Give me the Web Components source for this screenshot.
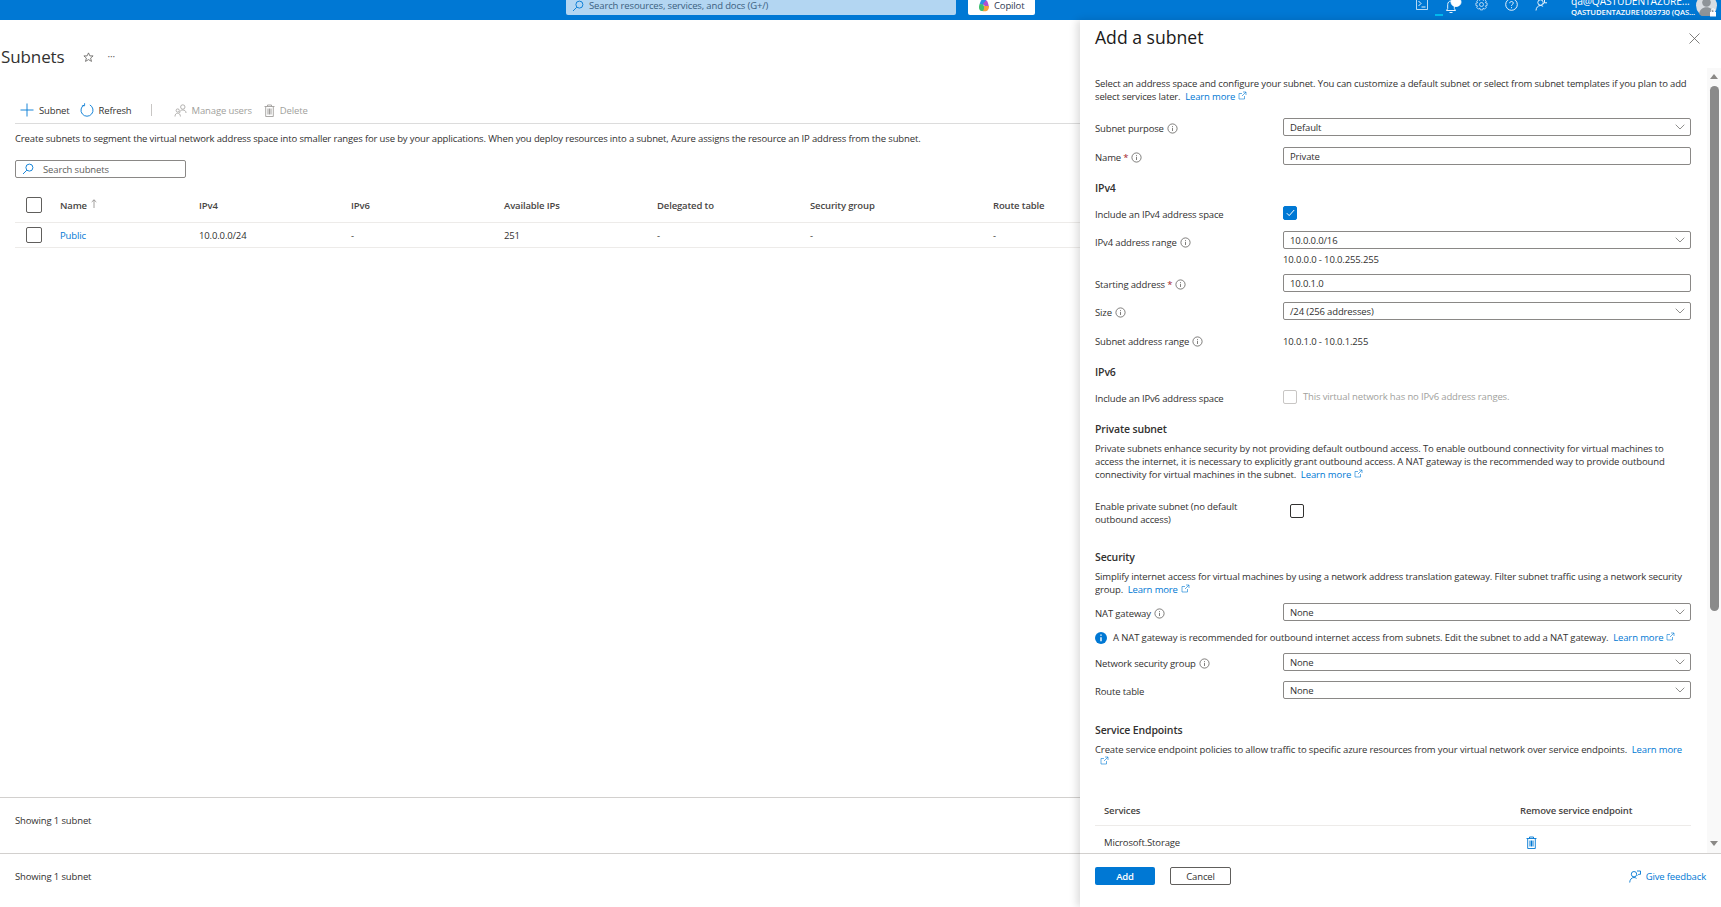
<!DOCTYPE html>
<html lang="en">
<head>
<meta charset="utf-8">
<title>Add a subnet</title>
<style>
  html, body { margin: 0; height: 100%; overflow: hidden; background: #fff; }
  body { font: 9.5px/13px "Open Sans", sans-serif; letter-spacing: -.14px; color: #323130; }
</style>
</head>
<body>
<az-shell>
  <az-topbar slot="top"></az-topbar>
  <az-blade slot="left"></az-blade>
  <az-panel slot="right">
    <p style="margin:9px 0 0">Select an address space and configure your subnet. You can customize a default subnet or select from subnet templates if you plan to add<br>select services later. &nbsp;<az-learn>Learn more</az-learn></p>
    <az-field style="margin-top:15px" label="Subnet purpose" info><az-select>Default</az-select></az-field>
    <az-field style="margin-top:11px" label="Name" required info><az-input>Private</az-input></az-field>
    <az-heading style="margin-top:16px">IPv4</az-heading>
    <az-field style="margin-top:11px" label="Include an IPv4 address space" pad="2"><az-check state="on"></az-check></az-field>
    <az-field style="margin-top:10px" label="IPv4 address range" info pad="5"><az-select>10.0.0.0/16</az-select></az-field>
    <az-field style="margin-top:4px" pad="0">10.0.0.0 - 10.0.255.255</az-field>
    <az-field style="margin-top:8px" label="Starting address" required info><az-input>10.0.1.0</az-input></az-field>
    <az-field style="margin-top:10px" label="Size" info><az-select>/24 (256 addresses)</az-select></az-field>
    <az-field style="margin-top:15px" label="Subnet address range" info pad="0">10.0.1.0 - 10.0.1.255</az-field>
    <az-heading style="margin-top:17px">IPv6</az-heading>
    <az-field style="margin-top:11px" label="Include an IPv6 address space" pad="2"><az-check state="off">This virtual network has no IPv6 address ranges.</az-check></az-field>
    <az-heading style="margin-top:17px">Private subnet</az-heading>
    <p style="margin:6px 0 0;letter-spacing:-.12px">Private subnets enhance security by not providing default outbound access. To enable outbound connectivity for virtual machines to<br>access the internet, it is necessary to explicitly grant outbound access. A NAT gateway is the recommended way to provide outbound<br>connectivity for virtual machines in the subnet. &nbsp;<az-learn>Learn more</az-learn></p>
    <az-field style="margin-top:19px" label="Enable private subnet (no default outbound access)" pad="0"><az-check state="empty" style="margin:4px 0 0 7px"></az-check></az-field>
    <az-heading style="margin-top:24px">Security</az-heading>
    <p style="margin:6px 0 0">Simplify internet access for virtual machines by using a network address translation gateway. Filter subnet traffic using a network security<br>group. &nbsp;<az-learn>Learn more</az-learn></p>
    <az-field style="margin-top:7px" label="NAT gateway" info><az-select>None</az-select></az-field>
    <az-note style="margin-top:10px;letter-spacing:-.12px">A NAT gateway is recommended for outbound internet access from subnets. Edit the subnet to add a NAT gateway. &nbsp;<az-learn>Learn more</az-learn></az-note>
    <az-field style="margin-top:9px" label="Network security group" info><az-select>None</az-select></az-field>
    <az-field style="margin-top:10px" label="Route table"><az-select>None</az-select></az-field>
    <az-heading style="margin-top:24px">Service Endpoints</az-heading>
    <p style="margin:6px 0 0;letter-spacing:-.12px">Create service endpoint policies to allow traffic to specific azure resources from your virtual network over service endpoints. &nbsp;<az-learn wrap>Learn more</az-learn></p>
    <az-endpoints style="margin-top:27px"></az-endpoints>
  </az-panel>
</az-shell>

<script>
const ICONS = {
  info: '<svg width="11" height="11" viewBox="0 0 11 11" fill="none" stroke="#605e5c" stroke-width=".8"><circle cx="5.5" cy="5.5" r="4.6"/><path d="M5.5 4.8v3.2M5.5 3v.9"/></svg>',
  ext: '<svg width="9" height="9" viewBox="0 0 9 9" fill="none" stroke="#0078d4" stroke-width=".6"><path d="M6.5 5v3H1V2.5h3M5 1h3v3M8 1 4 5"/></svg>',
  chev: '<svg width="10" height="6" viewBox="0 0 10 6" fill="none" stroke="#605e5c" stroke-width=".7"><path d="m.7.7 4.3 4.3L9.3.7"/></svg>',
  search: '<svg width="12" height="12" viewBox="0 0 12 12" fill="none" stroke="#0078d4" stroke-width=".9"><circle cx="7.4" cy="4.6" r="3.5"/><path d="M4.8 7.2 1 11"/></svg>',
  plus: '<svg width="14" height="14" viewBox="0 0 14 14" stroke="#0078d4" stroke-width=".9"><path d="M7 .5v13M.5 7h13"/></svg>',
  refresh: '<svg width="14" height="14" viewBox="0 0 14 14" fill="none" stroke="#0078d4" stroke-width=".9"><path d="M4.2 1.9a6 6 0 1 0 5.6 0"/><path d="M4.6.2v2.6H1.9" stroke-width=".8"/></svg>',
  users: '<svg width="13" height="13" viewBox="0 0 13 13" fill="none" stroke="#a19f9d" stroke-width=".8"><circle cx="8.8" cy="3" r="2.2"/><path d="M5.6 9c0-2 1.300-3 3.200-3s3.200 1 3.200 3"/><circle cx="3.700" cy="6.500" r="1.600"/><path d="M1 12.500c0-2 1-3.300 2.700-3.300s2.700 1.300 2.700 3.300"/></svg>',
  trash: c => `<svg width="11" height="13" viewBox="0 0 11 13" fill="none" stroke="${c}" stroke-width=".9"><path d="M.5 2.500h10M3.500 2.500V1h4v1.500M1.700 2.500V12.500h7.600V2.500"/><path d="M4 4.500v6M5.500 4.500v6M7 4.500v6" stroke-width="1"/></svg>`,
  star: '<svg width="11" height="11" viewBox="0 0 11 11" fill="none" stroke="#605e5c" stroke-width=".8"><path d="m5.500.9 1.400 3h3.200L7.600 6.100l.9 3.300-3-1.800-3 1.800.9-3.300L.9 3.900h3.200z"/></svg>',
  close: '<svg width="11" height="11" viewBox="0 0 11 11" stroke="#605e5c" stroke-width=".8"><path d="m.5.500 10 10M10.500.500l-10 10"/></svg>',
  feedback: '<svg width="12" height="13" viewBox="0 0 12 13" fill="none" stroke="#0078d4" stroke-width=".9"><circle cx="5" cy="4.200" r="2.700"/><path d="M.7 12.500c.2-3 1.900-5 4.300-5 1 0 1.800.3 2.500.9M8 1h3.500v3.300H9.700L8.600 5.500"/></svg>',
  copilot: '<svg width="12" height="13" viewBox="0 0 12 13"><path d="M3 1.500C4 .3 7 .2 8 1.200L9 5 4 6 1.600 5z" fill="#2a8fe8"/><path d="M8 1.200c1.200.4 1.800 2 2.200 3.500L11 8 7.500 8 5 5z" fill="#b04fd0"/><path d="M1.600 5 5 5.400 7 8.500 6 12H3.500C1 12 .4 8 1.600 5z" fill="#3fc06e"/><path d="M5.800 7h5c.6 2-.8 5-3 5.300H4.500C6 11 6.300 9 5.800 7z" fill="#f7a13b"/></svg>',
  terminal: '<svg width="12" height="12" viewBox="0 0 12 12" fill="none" stroke="#fff" stroke-width=".9"><path d="M.5.500h11v11H.500z" stroke-opacity=".8"/><path d="m2.500 3 2.500 2.500L2.500 8M5.500 9h4"/></svg>',
  bell: '<svg width="17" height="18" viewBox="0 0 17 18" fill="none" stroke="#fff" stroke-width=".9"><path d="M1.500 14.500h9l-1.200-2V8.500c0-2-1.400-3.500-3.300-3.500S2.700 6.500 2.700 8.500v4zM4.500 16.500h3"/><ellipse cx="11" cy="6" rx="5" ry="4.500" fill="#fff"/></svg>',
  gear: '<svg width="13" height="13" viewBox="0 0 13 13" fill="none" stroke="#fff" stroke-width=".8" stroke-opacity=".85"><circle cx="6.500" cy="6.500" r="2"/><path d="M5.300.7h2.400l.4 1.700 1.500-.9 1.700 1.700-.9 1.500 1.700.4v2.400l-1.700.4.9 1.500-1.700 1.700-1.500-.9-.4 1.700H5.300l-.4-1.700-1.500.9-1.700-1.700.9-1.500-1.700-.4V5.100l1.700-.4-.9-1.500 1.700-1.700 1.500.9z"/></svg>',
  help: '<svg width="13" height="13" viewBox="0 0 13 13" fill="none" stroke="#fff" stroke-width=".9"><circle cx="6.500" cy="6.500" r="5.800"/><path d="M4.700 5.200c0-1 .8-1.700 1.800-1.700s1.800.7 1.800 1.600c0 1.300-1.800 1.300-1.800 2.700M6.500 9.200v1"/></svg>',
  person: '<svg width="13" height="13" viewBox="0 0 13 13" fill="none" stroke="#fff" stroke-width=".9"><circle cx="5.500" cy="4.500" r="2.700"/><path d="M1 12.500c.2-3 2-5 4.500-5 1 0 1.900.3 2.600.9M9.500 1.500v3.300H12M9.500 4.800 8 6.200"/></svg>',
  avatar: '<svg width="21" height="21" viewBox="0 0 21 21"><circle cx="10.500" cy="10.500" r="10.500" fill="#d8dde2"/><circle cx="10.500" cy="7.500" r="4.300" fill="#8e9499"/><path d="M3 19c.7-4.500 3.600-6.800 7.500-6.800S17.300 14.500 18 19a10.500 10.500 0 0 1-15 0z" fill="#8e9499"/></svg>',
  lock: '<svg width="8" height="9" viewBox="0 0 8 9"><path d="M2.300 4V2.500a1.700 1.700 0 0 1 3.400 0V4" fill="none" stroke="#fff"/><path d="M1 4h6v4.500H1z" fill="#fff"/></svg>',
  infoFill: '<svg width="12" height="12" viewBox="0 0 12 12"><circle cx="6" cy="6" r="6" fill="#0078d4"/><path d="M6 5.200v4M6 2.500v1.300" stroke="#fff" stroke-width="1.400"/></svg>',
  check: '<svg width="9" height="8" viewBox="0 0 9 8" fill="none" stroke="#fff" stroke-width="1"><path d="m.8 4.200 2.400 2.400L8.200 1"/></svg>'
};

class AzElement extends HTMLElement {
  connectedCallback() {
    if (this.shadowRoot) return;
    this.attachShadow({ mode: 'open' });
    this.shadowRoot.innerHTML = `<style>${this.css()}</style>${this.html()}`;
  }
}

class AzShell extends AzElement {
  css() {
    return `
      :host { display: grid; grid-template: 20px 1fr / 1080px 1fr; height: 907px; overflow: hidden; }
      ::slotted([slot=top]) { grid-column: 1 / 3; }
    `;
  }
  html() {
    return `<slot name="top"></slot><slot name="left"></slot><slot name="right"></slot>`;
  }
}

class AzTopbar extends AzElement {
  css() {
    return `
      :host { display: block; height: 20px; overflow: hidden; background: #0078d4; color: #fff; }
      .row { display: flex; align-items: flex-start; margin-top: -4px; height: 24px; }
      .search { display: flex; align-items: center; gap: 5px; margin-left: 566px; width: 384px; height: 19px; padding: 0 0 0 6px;
        background: #b3d6f2; border-radius: 0 0 2px 2px; color: #3b5f80; }
      .copilot { display: flex; align-items: center; gap: 4px; margin-left: 12px; width: 57px; height: 19px; padding: 0 0 0 10px;
        background: #fff; border-radius: 0 0 2px 2px; color: #2f3a52; }
      .icons { display: flex; margin-left: auto; align-items: flex-start; }
      .ic { display: block; margin-top: 2px; }
      .ic svg { display: block; }
      .bell { margin: 0 0 0 17px; position: relative; }
      .bar { position: absolute; left: -10px; top: 18px; width: 8px; height: 2px; background: #00bcf2; }
      .gear { margin-left: 13px; }
      .help { margin-left: 17px; }
      .person { margin-left: 17px; }
      .who { margin: 0 0 0 23px; width: 122px; font-size: 10.3px; line-height: 11px; white-space: nowrap; }
      .who b { display: block; font-size: 7.7px; font-weight: 600; letter-spacing: -.1px; }
      .avatar { position: relative; margin: -1px 4px 0 3px; height: 21px; }
      .lock { position: absolute; left: 13px; top: 12px; width: 8px; height: 9px; }
    `;
  }
  html() {
    return `<div class="row">
      <div class="search">${ICONS.search}<span>Search resources, services, and docs (G+/)</span></div>
      <div class="copilot">${ICONS.copilot}<span>Copilot</span></div>
      <div class="icons">
        <span class="ic">${ICONS.terminal}</span>
        <span class="ic bell">${ICONS.bell}<i class="bar"></i></span>
        <span class="ic gear">${ICONS.gear}</span>
        <span class="ic help">${ICONS.help}</span>
        <span class="ic person">${ICONS.person}</span>
        <div class="who">qa@QASTUDENTAZURE...<b>QASTUDENTAZURE1003730 (QAS...</b></div>
        <div class="avatar">${ICONS.avatar}<span class="lock">${ICONS.lock}</span></div>
      </div>
    </div>`;
  }
}

class AzBlade extends AzElement {
  css() {
    return `
      :host { display: flex; flex-direction: column; height: 887px; min-width: 0; overflow: hidden; }
      .title { display: flex; align-items: center; height: 26px; margin-top: 24px; padding-left: 1px; }
      h1 { margin: 0; font-size: 17px; font-weight: 400; line-height: 26px; letter-spacing: -.1px; }
      .star { margin-left: 18px; display: flex; }
      .dots { margin-left: 14px; color: #605e5c; font-size: 10px; position: relative; top: -1px; }
      .tools { display: flex; align-items: center; height: 26px; margin: 27px 0 0 15px; border-bottom: 1px solid #dcdcdc; }
      .tool { display: flex; align-items: center; gap: 5px; white-space: nowrap; }
      .tool.off { color: #a19f9d; }
      .tool svg { display: block; }
      .sep { width: 1px; height: 12px; background: #c8c6c4; margin: 0 22px 0 19px; }
      .desc { margin: 8px 0 0 15px; white-space: nowrap; }
      .search { display: flex; align-items: center; gap: 9px; box-sizing: border-box; width: 171px; height: 18px; margin: 15px 0 0 15px; padding-left: 6px;
        border: 1px solid #8a8886; border-radius: 2px; color: #605e5c; }
      .table { margin: 10px 0 0 15px; }
      .tr { display: grid; grid-template-columns: 45px 139px 152px 153px 153px 153px 183px 87px; align-items: center; border-bottom: 1px solid #edebe9; }
      .tr.head { height: 34px; font-weight: 600; color: #484644; }
      .tr.row { height: 24px; }
      .box { display: block; box-sizing: border-box; width: 16px; height: 16px; margin-left: 11px; border: 1px solid #605e5c; border-radius: 2px; }
      .sort { display: inline-block; margin-left: 4px; vertical-align: 1px; }
      a { color: #0078d4; text-decoration: none; }
      .grow { flex: 1; }
      .foot { box-sizing: border-box; padding: 16px 0 0 15px; border-top: 1px solid #d2d0ce; }
    `;
  }
  html() {
    const head = ['IPv4', 'IPv6', 'Available IPs', 'Delegated to', 'Security group', 'Route table'];
    return `
      <div class="title"><h1>Subnets</h1><span class="star">${ICONS.star}</span><span class="dots">···</span></div>
      <div class="tools">
        <span class="tool" style="margin-left:5px">${ICONS.plus}Subnet</span>
        <span class="tool" style="margin-left:10px">${ICONS.refresh}Refresh</span>
        <i class="sep"></i>
        <span class="tool off">${ICONS.users}Manage users</span>
        <span class="tool off" style="margin-left:12px">${ICONS.trash('#a19f9d')}Delete</span>
      </div>
      <div class="desc">Create subnets to segment the virtual network address space into smaller ranges for use by your applications. When you deploy resources into a subnet, Azure assigns the resource an IP address from the subnet.</div>
      <div class="search">${ICONS.search}<span>Search subnets</span></div>
      <div class="table">
        <div class="tr head"><span><i class="box"></i></span><span>Name<svg class="sort" width="6" height="9" viewBox="0 0 6 9" fill="none" stroke="#8a8886" stroke-width=".8"><path d="M3 9V.8M.7 3 3 .8 5.300 3"/></svg></span>${head.map(h => `<span>${h}</span>`).join('')}</div>
        <div class="tr row"><span><i class="box"></i></span><a>Public</a><span>10.0.0.0/24</span><span>-</span><span>251</span><span>-</span><span>-</span><span>-</span></div>
      </div>
      <div class="grow"></div>
      <div class="foot" style="height:56px">Showing 1 subnet</div>
      <div class="foot" style="height:54px">Showing 1 subnet</div>
    `;
  }
}

class AzPanel extends AzElement {
  css() {
    return `
      :host { display: flex; flex-direction: column; height: 887px; background: #fff; position: relative; z-index: 1; box-shadow: -3px 0 8px rgba(0,0,0,.14); }
      header { display: flex; justify-content: space-between; align-items: center; height: 34px; padding: 0 21px 0 15px; margin-bottom: 14px; flex: none; }
      h2 { margin: 0; font-size: 17.6px; font-weight: 500; line-height: 34px; color: #1b1a19; letter-spacing: 0; }
      header svg { display: block; margin-top: 3px; }
      .body { display: flex; flex: 1; min-height: 0; }
      .content { width: 596px; margin-left: 15px; overflow: hidden; white-space: nowrap; }
      .bar { display: flex; flex-direction: column; align-items: center; width: 14px; margin-left: 16px; background: #f9f9f9; }
      .up, .down { width: 0; height: 0; border: 4.5px solid transparent; flex: none; }
      .up { border-bottom: 5px solid #8a8886; border-top: 0; margin-top: 6px; }
      .thumb { width: 9px; height: 525px; margin-top: 7px; background: #8a8a8a; border-radius: 5px; flex: none; }
      .down { border-top: 5px solid #8a8886; border-bottom: 0; margin-top: auto; margin-bottom: 7px; }
      footer { display: flex; align-items: flex-start; box-sizing: border-box; height: 54px; border-top: 1px solid #d2d0ce; padding: 13px 15px 0; flex: none; }
      button { box-sizing: border-box; height: 18px; padding: 0; font: inherit; letter-spacing: inherit; border-radius: 2px; }
      .add { width: 60px; background: #0078d4; border: 0; color: #fff; font-weight: 600; }
      .cancel { width: 61px; margin-left: 15px; background: #fff; border: 1px solid #605e5c; color: #323130; }
      .fb { display: flex; align-items: center; gap: 5px; height: 18px; margin-left: auto; color: #0078d4; }
    `;
  }
  html() {
    return `
      <header><h2>Add a subnet</h2>${ICONS.close}</header>
      <div class="body">
        <div class="content"><slot></slot></div>
        <div class="bar"><i class="up"></i><i class="thumb"></i><i class="down"></i></div>
      </div>
      <footer>
        <button class="add">Add</button><button class="cancel">Cancel</button>
        <span class="fb">${ICONS.feedback}Give feedback</span>
      </footer>
    `;
  }
}

class AzHeading extends AzElement {
  css() { return `:host { display: block; height: 14px; font-size: 10.5px; line-height: 14px; font-weight: 600; color: #323130; }`; }
  html() { return `<slot></slot>`; }
}

class AzField extends AzElement {
  css() {
    const pad = this.getAttribute('pad') ?? 4;
    return `
      :host { display: grid; grid-template-columns: 188px 408px; align-items: start; }
      .label { padding-top: ${pad}px; white-space: normal; width: 160px; }
      .label svg { vertical-align: -2px; margin-left: 3px; }
      .req { color: #a4262c; }
    `;
  }
  html() {
    const text = this.getAttribute('label') || '';
    const req = this.hasAttribute('required') ? ' <span class="req">*</span>' : '';
    const info = this.hasAttribute('info') ? ICONS.info : '';
    return `<div class="label">${text}${req}${info}</div><div><slot></slot></div>`;
  }
}

class AzInput extends AzElement {
  css() {
    return `
      :host { display: flex; align-items: center; box-sizing: border-box; height: 18px; padding-left: 6px;
        border: 1px solid #8a8886; border-radius: 2px; background: #fff; }
    `;
  }
  html() { return `<slot></slot>`; }
}

class AzSelect extends AzInput {
  css() {
    return super.css() + `
      :host { justify-content: space-between; padding-right: 5px; }
      svg { display: block; }
    `;
  }
  html() { return `<span><slot></slot></span>${ICONS.chev}`; }
}

class AzCheck extends AzElement {
  css() {
    const state = this.getAttribute('state');
    const border = state === 'on' ? '#0078d4' : state === 'off' ? '#c8c6c4' : '#323130';
    return `
      :host { display: flex; gap: 6px; height: 14px; color: #a19f9d; }
      i { display: flex; align-items: center; justify-content: center; box-sizing: border-box; width: 14px; height: 14px;
        border: 1px solid ${border}; border-radius: 2px; background: ${state === 'on' ? '#0078d4' : '#fff'}; flex: none; }
      span { line-height: 14px; }
    `;
  }
  html() {
    return `<i>${this.getAttribute('state') === 'on' ? ICONS.check : ''}</i><span><slot></slot></span>`;
  }
}

class AzLearn extends AzElement {
  css() {
    return `
      :host { display: inline; color: #0078d4; }
      svg { vertical-align: 0; margin-left: 3px; }
      .wrap { display: block; margin-left: 2px; height: 12px; line-height: 12px; }
    `;
  }
  html() {
    return this.hasAttribute('wrap')
      ? `<slot></slot><span class="wrap">${ICONS.ext}</span>`
      : `<slot></slot>${ICONS.ext}`;
  }
}

class AzNote extends AzElement {
  css() {
    return `
      :host { display: flex; align-items: center; gap: 6px; height: 13px; }
      svg { display: block; }
    `;
  }
  html() { return `${ICONS.infoFill}<span><slot></slot></span>`; }
}

class AzEndpoints extends AzElement {
  css() {
    return `
      :host { display: block; }
      .tr { display: grid; grid-template-columns: 416px 180px; align-items: center; padding-left: 9px; }
      .head { box-sizing: border-box; height: 31px; border-bottom: 1px solid #edebe9; font-weight: 600; color: #484644; }
      .row { height: 32px; }
      svg { display: block; margin-left: 6px; }
    `;
  }
  html() {
    return `
      <div class="tr head"><span>Services</span><span>Remove service endpoint</span></div>
      <div class="tr row"><span>Microsoft.Storage</span>${ICONS.trash('#0078d4')}</div>
    `;
  }
}

customElements.define('az-shell', AzShell);
customElements.define('az-topbar', AzTopbar);
customElements.define('az-blade', AzBlade);
customElements.define('az-panel', AzPanel);
customElements.define('az-heading', AzHeading);
customElements.define('az-field', AzField);
customElements.define('az-input', AzInput);
customElements.define('az-select', AzSelect);
customElements.define('az-check', AzCheck);
customElements.define('az-learn', AzLearn);
customElements.define('az-note', AzNote);
customElements.define('az-endpoints', AzEndpoints);
</script>
</body>
</html>
